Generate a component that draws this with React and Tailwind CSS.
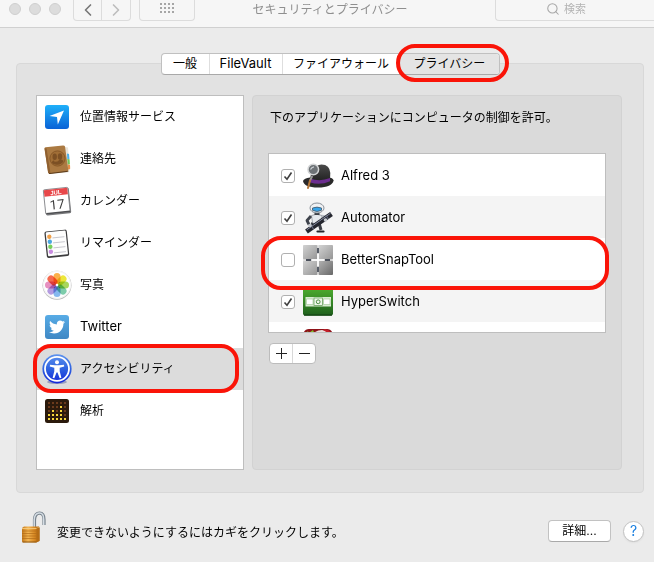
import { FaTwitter } from 'react-icons/fa';
import { ChevronLeft, ChevronRight, Search } from 'lucide-react';

function LocationIcon() {
  return (
    <svg viewBox="0 0 30 30" className="size-[30px]" aria-hidden="true">
      <defs>
        <linearGradient id="loc" x1="0" y1="0" x2="0" y2="1">
          <stop offset="0" stopColor="#1fb0fa" />
          <stop offset="1" stopColor="#0a62d6" />
        </linearGradient>
      </defs>
      <rect x="3" y="3" width="24" height="24" rx="3" fill="url(#loc)" />
      <path d="M22 8.5 15.800 22.500l-.8-7.500L7.500 14z" fill="#fff" />
    </svg>
  );
}

function ContactsIcon() {
  return (
    <svg viewBox="0 0 30 30" className="size-[30px]" aria-hidden="true">
      <path d="M21 2.500 26 3.500 28 26 24 28z" fill="#e9e4da" />
      <path d="M25 9.500l2 .5.5 5-2.200.2z" fill="#4db2ea" />
      <path d="M25.300 15l2.300.2.300 5-2.200.2z" fill="#72c65a" />
      <path d="M25.700 20.500l2.300.2.200 4-2.100.8z" fill="#e8914a" />
      <path d="M6 28.500 26 26.500 27.500 28 8 30z" fill="#c9c3b8" />
      <path d="M2.500 4.500Q2.400 3.500 3.500 3.300L21 1.500q1.500-.1 2 1L26.300 26q.1 1.300-1 1.500L8 29.600q-1.600.1-1.900-1.200z" fill="#ab7a42" />
      <path d="M2.500 4.500 4.500 4.200 8.500 29.500q-2 .3-2.400-1.200z" fill="#8f6030" />
      <path d="M7 29.600 25.800 27.300" stroke="#5c3a18" strokeWidth="1" />
      <circle cx="15.500" cy="14.500" r="7.600" fill="#a06e36" stroke="#875828" strokeWidth="1" />
      <ellipse cx="12.700" cy="12.800" rx="2.200" ry="3.200" fill="#7c5024" />
      <ellipse cx="18" cy="12.500" rx="2.200" ry="3.200" fill="#7c5024" />
      <path d="M9.500 18.500q.5-1.500 2.500-2.300l.5 1.500 3-.2 2.800-2.500q2.500 1 3.200 2.200-2 3.300-6 3.600t-6-2.300z" fill="#7c5024" />
    </svg>
  );
}

function CalendarIcon() {
  return (
    <svg viewBox="0 0 30 30" className="size-[30px]" aria-hidden="true">
      <g transform="rotate(-6 15 15)">
        <rect x="3" y="3" width="25" height="25.500" rx="1.500" fill="#77787a" />
        <rect x="2.500" y="2.500" width="24.500" height="24.500" rx="1" fill="#fff" stroke="#85868a" strokeWidth=".9" />
        <path d="M3 3h23.500v6.500H3z" fill="#e8474a" />
        <path d="M3 26.500h24" stroke="#4e4f52" strokeWidth="1.500" />
        <text x="14.800" y="8.500" fontSize="6" fontWeight="700" textAnchor="middle" fill="#fff" fontFamily="Liberation Sans, sans-serif">JUL</text>
        <text x="14.800" y="23" fontSize="13" textAnchor="middle" fill="#3d3d3d" fontFamily="Roboto, sans-serif">17</text>
      </g>
    </svg>
  );
}

function RemindersIcon() {
  return (
    <svg viewBox="0 0 30 30" className="size-[30px]" aria-hidden="true">
      <g transform="rotate(-6 15 15)">
        <rect x="3.500" y="2.500" width="22.500" height="26.500" rx="2" fill="#3c3c3e" />
        <rect x="4.800" y="3.300" width="20" height="24" rx="1" fill="#fdfdfd" />
        <path d="M11 9.500h12M11 14.500h12M11 19.500h12M11 24.500h12" stroke="#bcbcc4" strokeWidth=".8" />
        <circle cx="8" cy="8" r="2.200" fill="#f0a04a" />
        <circle cx="8" cy="13" r="2.200" fill="#4aa7e0" />
        <circle cx="8" cy="18" r="2.200" fill="#78d05c" />
        <circle cx="8" cy="23" r="2.200" fill="#c88be0" />
      </g>
    </svg>
  );
}

const petals = ['#fbb04a', '#ece63a', '#a8d65c', '#7dccaa', '#85b8ee', '#b49be0', '#e690c0', '#f56a4e'];

function PhotosIcon() {
  return (
    <svg viewBox="0 0 30 30" className="size-[30px]" aria-hidden="true">
      <circle cx="15" cy="15.300" r="14.500" fill="#b9b9b9" />
      <circle cx="15" cy="14.800" r="14.200" fill="#f5f5f5" />
      <circle cx="15" cy="14.800" r="12.800" fill="#fff" />
      {petals.map((color, i) => (
        <rect
          key={color}
          x="11.500"
          y="3"
          width="7"
          height="11"
          rx="3.500"
          fill={color}
          className="mix-blend-multiply"
          transform={`rotate(${i * 45} 15 15)`}
        />
      ))}
      <circle cx="15" cy="15" r="1.200" fill="#fff" />
    </svg>
  );
}

function TwitterIcon() {
  return (
    <span className="m-[3px] grid size-6 place-items-center rounded-[3px] bg-linear-to-b from-[#58ace6] to-[#3f88c4] text-white">
      <FaTwitter className="size-4" />
    </span>
  );
}

function AccessibilityIcon() {
  return (
    <svg viewBox="0 0 30 30" className="size-[30px]" aria-hidden="true">
      <defs>
        <linearGradient id="acc" x1="0" y1="0" x2="0" y2="1">
          <stop offset="0" stopColor="#5f94ee" />
          <stop offset=".5" stopColor="#2f63e0" />
          <stop offset="1" stopColor="#1426d8" />
        </linearGradient>
      </defs>
      <ellipse cx="15" cy="28" rx="10" ry="2" fill="#9aa0c0" />
      <circle cx="15" cy="14.800" r="14.600" fill="url(#acc)" />
      <circle cx="15" cy="14.800" r="12" fill="none" stroke="#fff" strokeWidth="1.800" />
      <circle cx="15" cy="8.300" r="2" fill="#fff" />
      <path d="M8 10.800 13 11.200h4l5-.4.2 1.700-4.500 1.200v3.500l1.700 6.600-1.700.5L15.500 18.500h-1L12.300 24.300l-1.700-.5 1.700-6.600v-3.500L7.800 12.500z" fill="#fff" />
    </svg>
  );
}

// number of lit LEDs in each column, counted from the bottom
const ledColumns = [2, 3, 2, 4, 1];
const ledRows = [0, 1, 2, 3, 4];

function AnalyticsIcon() {
  return (
    <svg viewBox="0 0 30 30" className="size-[30px]" aria-hidden="true">
      <rect x="3" y="3" width="24" height="24" rx="2.500" fill="#2b1a0c" />
      {ledColumns.map((lit, col) =>
        ledRows.map((row) => (
          <rect
            key={`${col}-${row}`}
            x={6 + col * 4}
            y={22 - row * 4}
            width="2"
            height="2"
            fill={row < lit ? '#f6d63c' : '#6b3a1c'}
          />
        )),
      )}
    </svg>
  );
}

function AlfredIcon() {
  return (
    <svg viewBox="0 0 30 30" className="size-[30px] overflow-visible" aria-hidden="true">
      <defs>
        <linearGradient id="hat" x1="0" y1="0" x2="0" y2="1">
          <stop offset="0" stopColor="#4a4a4a" />
          <stop offset="1" stopColor="#1c1c1c" />
        </linearGradient>
      </defs>
      <path d="M0 20q1-3 7-3.500h18q5 0 5.600 3Q29 26.500 15 26.500T0 20z" fill="#2a2a2a" />
      <path d="M7 20.500Q7.500 4.500 18.500 3.500q8.300.2 8.800 8.500l-.3 7.500q-10 5-20 1z" fill="url(#hat)" />
      <path d="M7 17.500q10 3.500 20-.5v3.300q-10 4.500-20.300 1z" fill="#6b2d8f" />
      <path d="M9.300 15 6.800 20" stroke="#999" strokeWidth="1.800" />
      <path d="M7 19.500 5 27" stroke="#b5773a" strokeWidth="2" strokeLinecap="round" />
      <circle cx="10.300" cy="8.500" r="5.300" fill="#6d7276" stroke="#d3d5d6" strokeWidth="1.500" />
      <path d="M7.500 8.500q1-2.500 3.500-2.700" stroke="#c9ced2" strokeWidth="1.200" fill="none" />
    </svg>
  );
}

function AutomatorIcon() {
  return (
    <svg viewBox="0 0 30 30" className="size-[30px] overflow-visible" aria-hidden="true">
      <path d="M10 19.500 8 24M16 20l2 7" stroke="#3a3d44" strokeWidth="3" fill="none" />
      <path d="M14.500 28.500h6" stroke="#26282e" strokeWidth="2.200" strokeLinecap="round" />
      <path d="M8.500 12.500Q13 10 19 12.500L18.500 20Q14 24 9.500 19.500z" fill="#e6e9ed" stroke="#858a92" strokeWidth=".7" />
      <path d="M8 13 4 17.500l2 4" fill="none" stroke="#3f434c" strokeWidth="2.800" strokeLinejoin="round" />
      <path d="M19 13l4 1 .5 3" fill="none" stroke="#b7bcc4" strokeWidth="2.800" strokeLinejoin="round" />
      <path d="M3.500 28.500 28.500 11" stroke="#24262e" strokeWidth="4.800" />
      <path d="M3.800 26.800 27.500 10.300" stroke="#858ba0" strokeWidth="1" />
      <path d="M8 22.500l2.500 3.500M23 12.500l2.500 3.500" stroke="#686e80" strokeWidth="1.200" />
      <circle cx="7" cy="22.500" r="1.800" fill="#c6cad0" />
      <circle cx="22.500" cy="17" r="1.800" fill="#c6cad0" />
      <path d="M11.500 9.500h5v2.500h-5z" fill="#3e4147" />
      <ellipse cx="14" cy="5" rx="7" ry="5" fill="#eff1f3" stroke="#6f7680" strokeWidth=".8" />
      <path d="M9.500 5q4.500-1.800 9 0v2.300q-4.500 2.500-9 0z" fill="#39a4e8" stroke="#3c4854" strokeWidth=".7" />
    </svg>
  );
}

function SnapIcon() {
  return (
    <svg viewBox="0 0 30 30" className="size-[30px]" aria-hidden="true">
      <defs>
        <linearGradient id="tileA" x1="0" y1="0" x2="1" y2="1">
          <stop offset="0" stopColor="#d2d2d2" />
          <stop offset="1" stopColor="#959595" />
        </linearGradient>
        <linearGradient id="tileB" x1="0" y1="0" x2="1" y2="1">
          <stop offset="0" stopColor="#b2b2b2" />
          <stop offset="1" stopColor="#686868" />
        </linearGradient>
      </defs>
      <rect x="0" y="0" width="30" height="30" rx="1.500" fill="#e4e4e4" />
      <rect x="0" y="0" width="14.300" height="14.300" rx="1" fill="url(#tileA)" />
      <rect x="15.700" y="0" width="14.300" height="14.300" rx="1" fill="url(#tileA)" />
      <rect x="0" y="15.700" width="14.300" height="14.300" rx="1" fill="url(#tileA)" />
      <rect x="15.700" y="15.700" width="14.300" height="14.300" rx="1" fill="url(#tileB)" />
      <path d="M15 3v5M15 22v5M3 15h5M22 15h5" stroke="#4c515c" strokeWidth="1.800" />
      <path d="M15 9v12M9 15h12" stroke="#fff" strokeWidth="1.600" />
    </svg>
  );
}

function SwitchIcon() {
  return (
    <svg viewBox="0 0 30 30" className="size-[30px]" aria-hidden="true">
      <defs>
        <linearGradient id="green" x1="0" y1="0" x2="0" y2="1">
          <stop offset="0" stopColor="#4fb02f" />
          <stop offset="1" stopColor="#1e5f1c" />
        </linearGradient>
      </defs>
      <rect x="0" y="0" width="30" height="28.500" rx="2" fill="url(#green)" />
      <path d="M1 28h28" stroke="#174a16" strokeWidth="1.500" />
      <rect x="2.500" y="10" width="25.500" height="9.500" fill="#d9ecd2" />
      <path d="M3.500 12h6.500v5.500H3.500zM20.500 12H27v5.500h-6.500z" fill="#fff" stroke="#9cc490" strokeWidth=".6" />
      <rect x="11" y="11" width="8.500" height="7.500" fill="#eef7ea" stroke="#58984c" strokeWidth=".7" />
      <circle cx="15.200" cy="14.800" r="1.900" fill="none" stroke="#3f8536" strokeWidth=".9" />
    </svg>
  );
}

function BallIcon() {
  return (
    <svg viewBox="0 0 30 30" className="size-[30px]" aria-hidden="true">
      <path d="M0 6Q1 0 6 0h18q5 0 6 6v18q-1 6-6 6H6q-5 0-6-6z" fill="#8e1218" />
      <path d="M11 30V4q3-3 8-3 6 .5 8 5v24z" fill="#e9dfdd" />
      <path d="M22 0q6 1 7 7l-3-1q-2-3-6-5z" fill="#c3202a" />
      <path d="M4 2l2.500 1.500L10 1l1 2.500-2.500 2L6 6z" fill="#7cc52c" />
    </svg>
  );
}

function LockIcon() {
  return (
    <svg viewBox="0 0 26 32" className="h-8 w-[26px]" aria-hidden="true">
      <defs>
        <linearGradient id="brass" x1="0" y1="0" x2="1" y2="0">
          <stop offset="0" stopColor="#c47a1c" />
          <stop offset=".35" stopColor="#f3b552" />
          <stop offset=".7" stopColor="#d98a24" />
          <stop offset="1" stopColor="#a9610f" />
        </linearGradient>
      </defs>
      <path d="M13.500 17V8.500Q14 2.300 18.500 2.200T23 8.500V14" fill="none" stroke="#77828c" strokeWidth="3.200" />
      <path d="M13.200 17V8.500Q13.700 2.300 18.300 2.100T22.700 8.500V14" fill="none" stroke="#d5dde4" strokeWidth="1.500" />
      <path d="M1 17 3 15.500h15l.5 1.500V30l-3 1.500H2L1 30.500z" fill="url(#brass)" />
      <path d="M1 17.500h14.500l3-1" fill="none" stroke="#f7cf86" strokeWidth=".8" />
      <path d="M1 20h14.500M1 22.500h14.500M1 25h14.500M1 27.500h14.500" stroke="#b26c18" strokeWidth=".7" />
      <path d="M15.500 17.500v13.800l3-1.500V16.500z" fill="#b56c14" />
      <path d="M1.500 31h14" stroke="#86500e" strokeWidth=".9" />
    </svg>
  );
}

const tabs = [
  { label: '一般', className: 'w-12' },
  { label: 'FileVault', className: 'w-[73px] text-[13px]' },
  { label: 'ファイアウォール', className: 'w-[118px]' },
];

const categories = [
  { label: '位置情報サービス', icon: LocationIcon },
  { label: '連絡先', icon: ContactsIcon },
  { label: 'カレンダー', icon: CalendarIcon },
  { label: 'リマインダー', icon: RemindersIcon },
  { label: '写真', icon: PhotosIcon },
  { label: 'Twitter', icon: TwitterIcon, className: 'text-[13px]' },
  { label: 'アクセシビリティ', icon: AccessibilityIcon, selected: true },
  { label: '解析', icon: AnalyticsIcon },
];

const apps = [
  { label: 'Alfred 3', icon: AlfredIcon, checked: true },
  { label: 'Automator', icon: AutomatorIcon, checked: true },
  { label: 'BetterSnapTool', icon: SnapIcon, checked: false },
  { label: 'HyperSwitch', icon: SwitchIcon, checked: true },
  { label: '', icon: BallIcon, checked: true },
];

function Toolbar() {
  return (
    <header className="flex h-7 items-start border-b border-[#d0d0d0] bg-[#f6f6f6]">
      <div className="flex gap-2 pt-[3px] pl-[9px]">
        <span className="size-3 rounded-full border border-[#cfcfcf] bg-[#dcdcdc]" />
        <span className="size-3 rounded-full border border-[#cfcfcf] bg-[#dcdcdc]" />
        <span className="size-3 rounded-full border border-[#cfcfcf] bg-[#dcdcdc]" />
      </div>
      <div className="ml-3 flex h-[21px] divide-x divide-[#dcdcdc] rounded-b-[4px] border border-t-0 border-[#dcdcdc]">
        <button type="button" aria-label="戻る" className="grid w-7 place-items-center pb-1 text-[#777]">
          <ChevronLeft className="size-5" strokeWidth={2} />
        </button>
        <button type="button" aria-label="進む" className="grid w-7 place-items-center pb-1 text-[#bdbdbd]">
          <ChevronRight className="size-5" strokeWidth={2} />
        </button>
      </div>
      <button
        type="button"
        aria-label="すべてを表示"
        className="ml-2 grid h-[21px] w-14 place-items-center rounded-b-[4px] border border-t-0 border-[#dcdcdc] pb-1"
      >
        <svg viewBox="0 0 15 12" className="h-3 w-[15px]" fill="#a6a6a6" aria-hidden="true">
          {[0, 4, 8, 12].map((x) => [1, 5, 9].map((y) => <rect key={`${x}-${y}`} x={x} y={y} width="2" height="2" />))}
        </svg>
      </button>
      <h1 className="flex-1 pt-0.5 pr-[30px] text-center text-xs leading-4 text-[#8f8f8f]">セキュリティとプライバシー</h1>
      <label className="flex h-[21px] w-[159px] items-center gap-1 rounded-bl-[4px] border-b border-l border-[#dcdcdc] pb-0.5 pl-[50px] text-[#a6a6a6]">
        <Search className="size-[14px]" strokeWidth={1.8} />
        <input type="search" aria-label="検索" placeholder="検索" className="w-20 text-[11px] leading-4 placeholder:text-[#b4b4b4]" />
      </label>
    </header>
  );
}

function Ring({ className }) {
  return <span className={`pointer-events-none absolute z-10 border-4 border-[#fa1408] ${className}`} />;
}

function Tabs() {
  return (
    <div role="tablist" className="relative z-10 mx-auto flex h-[22px] w-fit rounded-[4px] border border-[#c0c0c0] border-b-[#a9a9a9] bg-white text-xs">
      {tabs.map((tab) => (
        <button key={tab.label} type="button" role="tab" aria-selected="false" className={`border-r border-[#dedede] ${tab.className}`}>
          {tab.label}
        </button>
      ))}
      <div className="relative w-[98px]">
        <button type="button" role="tab" aria-selected="true" className="size-full rounded-r-[3px] bg-[#e4e4e4]">
          プライバシー
        </button>
        <Ring className="-top-2.5 -right-2.5 -bottom-2 -left-[5px] rounded-[19px]" />
      </div>
    </div>
  );
}

function Sidebar() {
  return (
    <ul className="w-52 shrink-0 border border-[#bebebe] bg-white">
      {categories.map((item) => (
        <li key={item.label} className={`relative h-[42px] ${item.selected ? 'bg-[#dcdcdc]' : ''}`}>
          <button type="button" className={`flex size-full items-center gap-2 pl-[5px] text-left ${item.className ?? ''}`}>
            <item.icon />
            {item.label}
          </button>
          {item.selected ? <Ring className="-top-1 right-1 -bottom-[3px] -left-1 rounded-[18px]" /> : null}
        </li>
      ))}
    </ul>
  );
}

function AppRow({ app }) {
  return (
    <li className="h-[42px] even:bg-[#f4f4f4]">
      <label className="flex h-full items-center gap-2 pt-px pl-3 text-[13px]">
        <span className="grid size-3.5 place-items-center">
          <input
            type="checkbox"
            defaultChecked={app.checked}
            aria-label={app.label || 'アプリケーション'}
            className="peer col-start-1 row-start-1 size-3.5 appearance-none rounded-[3px] border border-[#b0b0b0] bg-white"
          />
          <svg viewBox="0 0 14 14" className="pointer-events-none invisible col-start-1 row-start-1 size-3.5 peer-checked:visible" aria-hidden="true">
            <path d="M3.500 7.500 6 10.300 10.500 3.500" fill="none" stroke="#3f3f3f" strokeWidth="1.600" />
          </svg>
        </span>
        <app.icon />
        {app.label}
      </label>
    </li>
  );
}

function PrivacyPane() {
  return (
    <section className="min-w-0 flex-1 rounded-[4px] border border-[#d2d2d2] bg-[#dadada] pt-3.5 pr-[15px] pb-[105px] pl-[15px]">
      <p className="pl-0.5 leading-4">下のアプリケーションにコンピュータの制御を許可。</p>
      <div className="relative mt-[27px]">
        <ul className="h-[180px] overflow-hidden border border-[#bebebe] bg-white">
          {apps.map((app) => (
            <AppRow key={app.label} app={app} />
          ))}
        </ul>
        <Ring className="top-[83px] -right-[3px] -left-[7px] h-[54px] rounded-[20px]" />
      </div>
      <div className="mt-2.5 ml-px flex h-[21px] w-fit divide-x divide-[#d8d8d8] rounded-[4px] border border-[#bcbcbc] bg-white">
        <button type="button" aria-label="追加" className="grid w-[23px] place-items-center">
          <svg viewBox="0 0 11 11" className="size-[11px]" aria-hidden="true">
            <path d="M0 5.500h11M5.500 0v11" stroke="#222" strokeWidth="1" />
          </svg>
        </button>
        <button type="button" aria-label="削除" className="grid w-[22px] place-items-center">
          <svg viewBox="0 0 11 11" className="size-[11px]" aria-hidden="true">
            <path d="M0 5.500h11" stroke="#222" strokeWidth="1" />
          </svg>
        </button>
      </div>
    </section>
  );
}

export default function App() {
  return (
    <div className="min-h-dvh bg-[#ebebeb] font-['Inter','Noto_Sans_CJK_JP',sans-serif] text-xs text-black">
      <Toolbar />
      <main className="pt-[25px] pr-2.5 pl-4">
        <Tabs />
        <div className="-mt-3 flex gap-2 rounded-[4px] border border-[#d8d8d8] bg-[#e2e2e2] pt-[31px] pr-[21px] pb-[22px] pl-[19px]">
          <Sidebar />
          <PrivacyPane />
        </div>
      </main>
      <footer className="flex items-center gap-2.5 pt-[18px] pr-2.5 pl-[21px]">
        <LockIcon />
        <p className="flex-1 pt-3 leading-4">変更できないようにするにはカギをクリックします。</p>
        <div className="flex items-center gap-3 pt-2">
          <button type="button" className="h-[22px] w-[63px] rounded-[4px] border border-[#c2c2c2] border-b-[#a9a9a9] bg-white">
            詳細...
          </button>
          <button type="button" aria-label="ヘルプ" className="size-[21px] rounded-full border border-[#c2c2c2] bg-white text-sm leading-4 text-[#1a7fe0] shadow-xs">
            ?
          </button>
        </div>
      </footer>
    </div>
  );
}
